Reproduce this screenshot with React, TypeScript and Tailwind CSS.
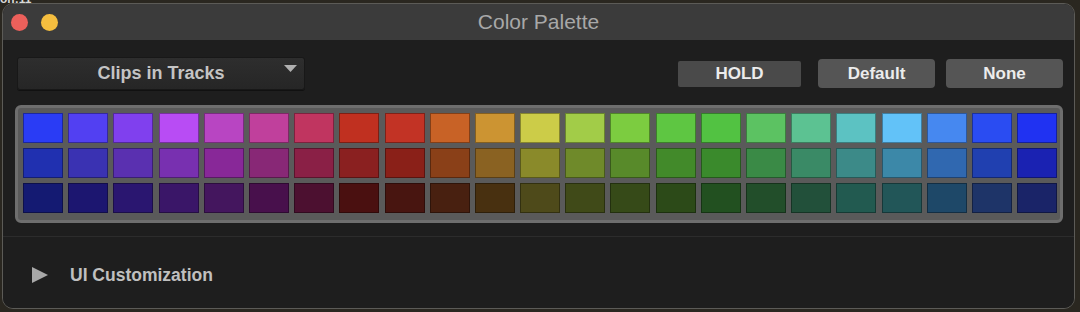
import React from "react";

const rows: string[][] = [
  ["#2a3cf5","#5240f2","#8040ee","#b84cf4","#b845c2","#c0409c","#c03560","#c03020","#c23325","#c86226","#cc9432","#cccc48","#a2cc48","#7ccc40","#5ec642","#52c242","#5cc262","#5cc292","#5cc2c2","#62c2f8","#4688f0","#2a4cf2","#2032f2"],
  ["#2030b0","#3a32b2","#5a30b0","#7830b0","#882898","#882876","#8a2046","#8a2020","#8a2018","#8a4018","#8a6222","#8a8a2a","#6f8a2a","#588a2a","#428a2a","#3a8a2c","#3a8a46","#3a8a66","#3c8a88","#3c88a8","#3068b0","#2040b0","#1a22b2"],
  ["#141a72","#1c1670","#2a1670","#3a1668","#44165e","#48104c","#4c1030","#4a1010","#481510","#482010","#483010","#4e4a1a","#404a18","#364a18","#2c4a18","#225020","#224e2a","#22503a","#225a50","#225658","#1e4868","#1e3468","#1a2468"],
];

export default function App() {
  const font = { fontFamily: '"Liberation Sans", Arial, sans-serif' };
  return (
    <div className="w-[1080px] h-[312px] bg-[#2a2720] pt-[3px] pl-[2px] pr-[5px] pb-[3px] overflow-hidden relative" style={font}>
      <div className="absolute left-[0px] top-[-8px] text-[12px] leading-[14px] font-bold text-[#d8d8d8]">on:11</div>
      <div className="relative w-full h-full flex flex-col rounded-[11px] border border-[#5c5b57] overflow-hidden bg-[#1e1e1e]">
        {/* Title bar */}
        <div className="relative h-[36px] bg-[#3b3b3b] flex items-center pl-[8px] gap-[13px] shrink-0">
          <div className="w-[17px] h-[17px] rounded-full bg-[#ec605b]" />
          <div className="w-[17px] h-[17px] rounded-full bg-[#f5be3f]" />
          <div className="absolute inset-0 flex items-center justify-center text-[21px] text-[#a8a8a8] pointer-events-none">
            Color Palette
          </div>
        </div>
        {/* Content */}
        <div className="flex-1 flex flex-col bg-[#1e1e1e]">
          <div className="flex items-center pl-[14px] pt-[17px] h-[50px]">
            <div className="relative w-[288px] h-[33px] rounded-[3px] bg-gradient-to-b from-[#2e2e2e] to-[#262626] border border-[#181818] shadow-[0_1px_0_#111] flex items-center justify-center">
              <span className="text-[18px] font-bold text-[#c4c4c4]">Clips in Tracks</span>
              <svg className="absolute right-[7px] top-[7px]" width="13" height="7" viewBox="0 0 13 7">
                <polygon points="0,0 13,0 6.5,7" fill="#b0b0b0" />
              </svg>
            </div>
            <div className="flex-1" />
            <div className="w-[123px] h-[26px] rounded-[2px] bg-[#4a4a4a] flex items-center justify-center text-[17px] font-bold text-[#ececec]">HOLD</div>
            <div className="ml-[17px] w-[117px] h-[29px] rounded-[4px] bg-[#555555] flex items-center justify-center text-[17px] font-bold text-[#ececec]">Default</div>
            <div className="ml-[11px] mr-[11px] w-[117px] h-[29px] rounded-[4px] bg-[#555555] flex items-center justify-center text-[17px] font-bold text-[#ececec]">None</div>
          </div>
          {/* Palette */}
          <div className="pl-[12px] pr-[10px] pt-[15px]">
            <div className="w-[1048px] h-[118px] rounded-[6px] border-[3px] border-[#6e6e6e] bg-[#5a5a5a] pl-[5px] pt-[5px] flex flex-col gap-[5px]">
              {rows.map((row, ri) => (
                <div key={ri} className="flex gap-[5.2px]">
                  {row.map((c, ci) => (
                    <div
                      key={ci}
                      className="w-[40px] h-[30px] border border-black/35"
                      style={{ backgroundColor: c }}
                    />
                  ))}
                </div>
              ))}
            </div>
          </div>
          <div className="mt-[13px] h-px bg-[#2c2c2c]" />
          <div className="flex items-center pl-[29px] pt-[25px]">
            <svg width="16" height="16" viewBox="0 0 16 16">
              <polygon points="0,0 16,8 0,16" fill="#a8a8a8" />
            </svg>
            <span className="ml-[22px] text-[17.5px] font-bold text-[#c0c0c0]">UI Customization</span>
          </div>
        </div>
      </div>
    </div>
  );
}
